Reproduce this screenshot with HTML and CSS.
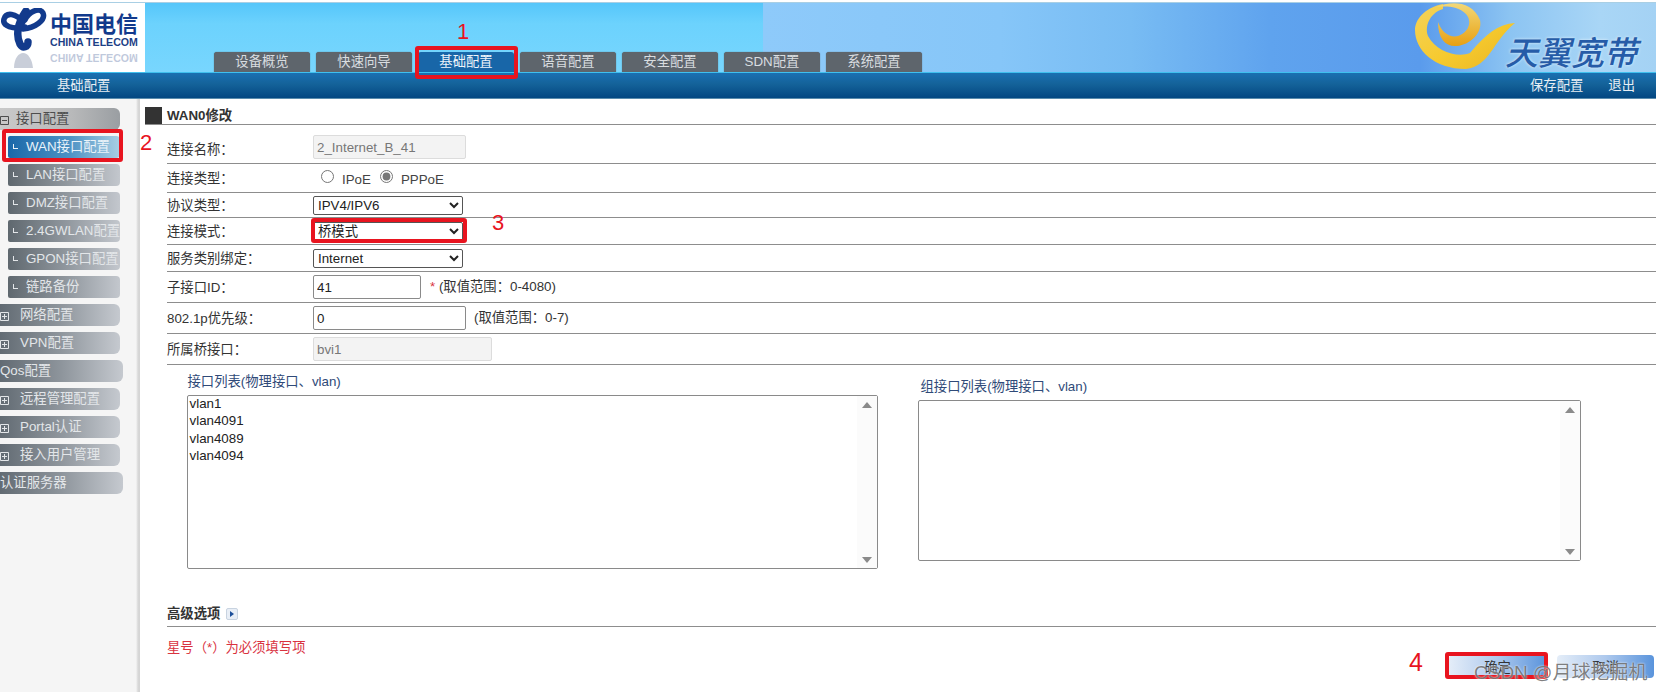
FILE: index.html
```html
<!DOCTYPE html>
<html lang="zh">
<head>
<meta charset="utf-8">
<title>WAN0修改</title>
<link rel="stylesheet" href="styles.css">
</head>
<body>
<div class="page">
  <header class="top">
    <div class="banner">
      <div class="logo">
        <svg class="logo-mark" viewBox="0 0 46 60" width="46" height="60" aria-hidden="true">
          <g fill="none" stroke="#123a8c" stroke-linecap="round">
            <path d="M22 14C15 5 5 4 3 11C1 18 12 22 24 19" stroke-width="5.5"/>
            <path d="M24 12C28 3 39 -1 42 5C45 12 34 20 22 21" stroke-width="5.5"/>
            <path d="M25 3C16 16 15 28 19 36C22 41 27 39 27 34" stroke-width="7.5"/>
          </g>
          <path d="M13 60C13 50 18 45 22 45C27 45 31 51 32 60Z" fill="#c9ced9"/>
        </svg>
        <div class="logo-text">
          <div class="logo-cn">中国电信</div>
          <div class="logo-en">CHINA TELECOM</div>
          <div class="logo-en logo-flip">CHINA TELECOM</div>
        </div>
      </div>
      <nav class="tabs">
        <a class="tab">设备概览</a>
        <a class="tab">快速向导</a>
        <a class="tab tab-on">基础配置</a>
        <a class="tab">语音配置</a>
        <a class="tab">安全配置</a>
        <a class="tab">SDN配置</a>
        <a class="tab">系统配置</a>
      </nav>
      <div class="brand">
        <svg class="brand-mark" viewBox="0 3 130 69" width="130" height="69" aria-hidden="true">
          <defs>
            <linearGradient id="gold" x1="0" y1="0" x2="1" y2="1">
              <stop offset="0" stop-color="#f3d25c"/>
              <stop offset=".55" stop-color="#f6ca2e"/>
              <stop offset="1" stop-color="#e9b524"/>
            </linearGradient>
            <linearGradient id="gold2" x1="0" y1="0" x2="0" y2="1">
              <stop offset="0" stop-color="#f2d877"/>
              <stop offset="1" stop-color="#e8a012"/>
            </linearGradient>
          </defs>
          <path fill="url(#gold)" d="M43 4C24 8 15 20 15 30C15 50 34 69 66 69C90 66 92 42 115 23C98 24 86 34 70 53C58 58 36 52 28 36C24 24 32 12 43 9Z"/>
          <path fill="url(#gold2)" d="M36 7C50 1 72 0 80 20C83 34 68 46 55 46C45 46 38 38 38 22C42 33 50 38 58 36C68 33 73 22 66 14C58 6 46 6 36 7Z"/>
        </svg>
        <span class="brand-text">天翼宽带</span>
      </div>
    </div>
    <div class="subnav">
      <span class="subnav-title">基础配置</span>
      <span class="subnav-links"><a>保存配置</a><a>退出</a></span>
    </div>
  </header>

  <div class="body">
    <aside class="side">
      <div class="item item-head"><svg class="box" viewBox="0 0 9 9"><path d="M.5.5h8v8h-8zM2 4.5h5"/></svg><span class="t1">接口配置</span></div>
      <div class="item sub sub-on"><i class="ell"></i>WAN接口配置</div>
      <div class="item sub"><i class="ell"></i>LAN接口配置</div>
      <div class="item sub"><i class="ell"></i>DMZ接口配置</div>
      <div class="item sub"><i class="ell"></i>2.4GWLAN配置</div>
      <div class="item sub"><i class="ell"></i>GPON接口配置</div>
      <div class="item sub"><i class="ell"></i>链路备份</div>
      <div class="item"><svg class="box" viewBox="0 0 9 9"><path d="M.5.5h8v8h-8zM2 4.5h5M4.5 2v5"/></svg><span class="t2">网络配置</span></div>
      <div class="item"><svg class="box" viewBox="0 0 9 9"><path d="M.5.5h8v8h-8zM2 4.5h5M4.5 2v5"/></svg><span class="t2">VPN配置</span></div>
      <div class="item wide">Qos配置</div>
      <div class="item"><svg class="box" viewBox="0 0 9 9"><path d="M.5.5h8v8h-8zM2 4.5h5M4.5 2v5"/></svg><span class="t2">远程管理配置</span></div>
      <div class="item"><svg class="box" viewBox="0 0 9 9"><path d="M.5.5h8v8h-8zM2 4.5h5M4.5 2v5"/></svg><span class="t2">Portal认证</span></div>
      <div class="item"><svg class="box" viewBox="0 0 9 9"><path d="M.5.5h8v8h-8zM2 4.5h5M4.5 2v5"/></svg><span class="t2">接入用户管理</span></div>
      <div class="item wide">认证服务器</div>
    </aside>

    <main class="main">
      <h1 class="title"><span class="title-mark"></span>WAN0修改</h1>

      <div class="row row-name">
        <label class="lab lab-low">连接名称：</label>
        <input class="field w-name" type="text" value="2_Internet_B_41" disabled>
      </div>
      <div class="row row-type">
        <label class="lab">连接类型：</label>
        <label class="radio"><input type="radio" name="c">IPoE</label>
        <label class="radio"><input type="radio" name="c" checked>PPPoE</label>
      </div>
      <div class="row row-proto">
        <label class="lab">协议类型：</label>
        <select class="sel"><option>IPV4/IPV6</option></select>
      </div>
      <div class="row row-mode">
        <label class="lab">连接模式：</label>
        <select class="sel"><option>桥模式</option></select>
      </div>
      <div class="row row-mode">
        <label class="lab">服务类别绑定：</label>
        <select class="sel"><option>Internet</option></select>
      </div>
      <div class="row row-tall">
        <label class="lab">子接口ID：</label>
        <input class="field w-id" type="text" value="41">
        <span class="hint hint-star"><b>*</b> (取值范围：0-4080)</span>
      </div>
      <div class="row row-tall">
        <label class="lab">802.1p优先级：</label>
        <input class="field w-name" type="text" value="0">
        <span class="hint">(取值范围：0-7)</span>
      </div>
      <div class="row row-tall">
        <label class="lab">所属桥接口：</label>
        <input class="field w-bvi" type="text" value="bvi1" disabled>
      </div>

      <div class="lists">
        <section class="col col-l">
          <div class="col-title">接口列表(物理接口、vlan)</div>
          <div class="listbox lb-l">
            <ul class="opts">
              <li>vlan1</li>
              <li>vlan4091</li>
              <li>vlan4089</li>
              <li>vlan4094</li>
            </ul>
            <div class="scroll"><i class="up"></i><i class="down"></i></div>
          </div>
        </section>
        <section class="col col-r">
          <div class="col-title">组接口列表(物理接口、vlan)</div>
          <div class="listbox lb-r">
            <ul class="opts"></ul>
            <div class="scroll"><i class="up"></i><i class="down"></i></div>
          </div>
        </section>
      </div>

      <div class="adv">高级选项<span class="adv-btn"><i></i></span></div>
      <div class="foot">
        <div class="note">星号（*）为必须填写项</div>
        <div class="btns"><button class="btn">确定</button><button class="btn">取消</button></div>
      </div>
    </main>
  </div>

  <div class="rbox rb1"></div>
  <div class="rbox rb2"></div>
  <div class="rbox rb3"></div>
  <div class="rbox rb4"></div>
  <span class="num n1">1</span>
  <span class="num n2">2</span>
  <span class="num n3">3</span>
  <span class="num n4">4</span>
  <div class="mark">CSDN @月球挖掘机</div>
</div>
</body>
</html>
```

FILE: styles.css
```css
* { box-sizing: border-box; }
html, body { margin: 0; height: 692px; overflow: hidden; background: #fff; }
body { font: 13.33px/16px "Liberation Sans", "Noto Sans CJK SC", sans-serif; color: #333; }
.page { position: relative; width: 1662px; height: 692px; overflow: hidden; }

/* header */
.top { width: 1656px; padding-top: 2px; }
.banner {
  display: flex; height: 70px; border-top: 1px solid #a9cfe4;
  background:
    linear-gradient(180deg, #55c6fa 0, #6cd2fd 30%, #78d6fe 100%) 0 0 / 763px 100% no-repeat,
    linear-gradient(90deg, #8ecafa 763px, #86c6f8 1000px, #78bcf3 1130px, #5fa3ee 1270px, #5a9bec 1420px, #8cc4f2 1510px, #a9d6f6 1600px, #a4d2f4 1656px);
}
.logo { display: flex; width: 145px; flex: none; background: #fff; padding: 5px 0 0 1px; overflow: hidden; }
.logo-mark { flex: none; }
.logo-text { margin-left: 3px; padding-top: 1px; }
.logo-cn { font: 700 22px/27px "Noto Sans CJK SC", sans-serif; color: #123a8c; white-space: nowrap; }
.logo-en { font: 700 10.6px/9px "Liberation Sans", sans-serif; color: #1d3f86; white-space: nowrap; margin-top: 2px; }
.logo-flip { transform: scaleY(-1); opacity: .28; margin-top: 6px; }
.tabs { display: flex; gap: 6px; margin: 0 0 0 69px; align-self: flex-end; }
.tab {
  display: block; width: 96px; height: 20px; text-align: center; line-height: 20px;
  background: #5e656c; color: #d9dde0; border-radius: 3px 3px 0 0; box-shadow: 0 0 1px #4a5056;
}
.tab-on { background: #1866a8; color: #eef4fa; box-shadow: none; }
.brand { position: relative; flex: none; width: 256px; margin-left: auto; }
.brand-mark { display: block; position: absolute; left: 0; top: 0; }
.brand-text {
  position: absolute; left: 105px; top: 30px; font: italic 500 33px/36px "Noto Sans CJK SC", sans-serif;
  color: #265ca8; white-space: nowrap; text-shadow: 0 0 3px #e8f4fc;
}
.subnav {
  display: flex; justify-content: space-between; align-items: center; height: 27px; color: #e8eef4;
  padding: 0 21px 0 57px; border-top: 1px solid #3fc0ee; border-bottom: 1px solid #5a8cad;
  background: linear-gradient(180deg, #1a70b2 0, #146299 45%, #034782 100%);
  position: relative;
}
.subnav-links { display: flex; gap: 25px; }

/* layout */
.body { display: flex; height: 593px; }
.side {
  flex: none; width: 145px; padding-top: 9px; display: flex; flex-direction: column; gap: 6px;
  background: linear-gradient(90deg, #f5f5f5 0, #f5f5f5 136px, #d8d8d8 138px, #d4d4d4 140px, #fff 140px);
}
.item {
  display: flex; align-items: center; height: 22px; width: 120px; white-space: nowrap; overflow: hidden;
  color: #e3e6e9; border-radius: 0 6px 6px 0;
  background: linear-gradient(90deg, #626b73 0, #8e959c 50%, #c5c9cf 100%);
}
.item-head { background: linear-gradient(90deg, #c9c9c9 0, #b8b9ba 60%, #9a9ea2 100%); color: #4d4d4d; }
.wide { width: 123px; }
.sub { margin-left: 8px; width: 112px; border-radius: 2px 4px 4px 2px; background: linear-gradient(90deg, #5f686f 0, #8e959c 50%, #c3c7cd 100%); }
.sub-on { background: linear-gradient(90deg, #1a68a9 0, #4d92c4 55%, #a9cfe4 100%); color: #eaf3f9; }
.box { flex: none; width: 9px; height: 9px; margin-top: 2px; fill: none; stroke: currentColor; stroke-width: 1; }
.t1 { margin-left: 7px; }
.t2 { margin-left: 11px; }
.ell { flex: none; width: 5px; height: 5px; margin: 0 8px 1px 5px; border-left: 1px solid currentColor; border-bottom: 1px solid currentColor; }

/* main */
.main { flex: 1; min-width: 0; padding-top: 8px; }
.title {
  display: flex; align-items: center; gap: 5px; margin: 0 6px 0 0; height: 18px; font-size: 13.33px; line-height: 17px; font-weight: 700;
  color: #333; border-bottom: 1px solid #8d8d8d;
}
.title-mark { width: 17px; height: 17px; background: #333; }
.row { display: flex; align-items: center; margin: 0 6px 0 22px; border-bottom: 1px solid #8d8d8d; }
.row-name { height: 39px; padding-top: 6px; }
.row-type { height: 29px; }
.row-proto { height: 25px; }
.row-mode { height: 27px; }
.row-tall { height: 31px; }
.lab { flex: none; width: 146px; color: #333; padding-top: 1px; }
.lab-low { padding-top: 5px; }
.field {
  height: 24px; padding: 0 3px; font: 13.33px "Liberation Sans", sans-serif; color: #222; background: #fff;
  border: 1px solid #8a8a8a; border-radius: 2px; outline: 0;
}
.field:disabled { background: #f3f3f3; border-color: #dcdcdc; color: #777; }
.w-name { width: 153px; }
.w-id { width: 108px; }
.w-bvi { width: 179px; }
.radio { display: flex; align-items: center; color: #444; margin-right: 1px; padding-top: 4px; }
.radio input { width: 13px; height: 13px; margin: 0 8px 8px 8px; accent-color: #777; }
.sel {
  width: 150px; height: 19px; padding: 0; font: 13.33px "Liberation Sans", "Noto Sans CJK SC", sans-serif; color: #222;
  background: #fff; border: 1px solid #555; border-radius: 2px;
}
.hint { margin-left: 8px; color: #333; }
.hint-star { margin-left: 9px; }
.hint-star b { color: #d9333f; font-weight: 400; }

.lists { display: flex; gap: 40px; margin-left: 41.5px; height: 204px; }
.col-title { color: #2f4a78; padding-left: 1px; }
.col-l { width: 691px; padding-top: 9px; }
.col-r { width: 663px; padding-top: 14px; }
.col-r .col-title { padding-left: 3px; }
.listbox { display: flex; justify-content: space-between; background: #fff; border: 1px solid #8a8a8a; border-radius: 2px; }
.lb-l { height: 174px; margin-top: 5px; }
.lb-r { height: 161px; margin-top: 5px; }
.opts { list-style: none; margin: -1px 0 0; padding: 0 0 0 2px; color: #222; }
.opts li { height: 17.3px; line-height: 17.3px; }
.scroll { display: flex; flex-direction: column; justify-content: space-between; width: 20px; padding: 6px 0 5px; background: #fbfbfb; align-items: center; }
.up, .down { width: 0; height: 0; border-left: 5px solid transparent; border-right: 5px solid transparent; }
.up { border-bottom: 6px solid #8a8a8a; }
.down { border-top: 6px solid #8a8a8a; }

.adv {
  display: flex; align-items: center; height: 23px; margin: 35px 6px 0 22px; padding-bottom: 2px; font-weight: 700; color: #333;
  border-bottom: 1px solid #8d8d8d;
}
.adv-btn {
  display: flex; align-items: center; justify-content: center; width: 12px; height: 12px; margin-left: 6px;
  background: #e8eef6; border: 1px solid #c8d3e0; border-radius: 2px;
}
.adv-btn i { width: 0; height: 0; border-left: 4px solid #1c4f9a; border-top: 3px solid transparent; border-bottom: 3px solid transparent; }
.foot { display: flex; justify-content: space-between; margin: 0 8px 0 22px; }
.note { padding-top: 13px; color: #d9333f; }
.btns { display: flex; gap: 11px; margin-top: 28px; }
.btn {
  width: 97px; height: 23px; padding: 0; font: 13.33px "Liberation Sans", "Noto Sans CJK SC", sans-serif; color: #333;
  border: 0; border-radius: 4px; background: linear-gradient(90deg, #e4edf8 0, #aec9ed 50%, #5a94dc 100%);
}

/* overlays */
.rbox { position: absolute; border: 4px solid #e8141f; border-radius: 3px; }
.rb1 { left: 415px; top: 46px; width: 103px; height: 33px; }
.rb2 { left: 2px; top: 129px; width: 121px; height: 33px; }
.rb3 { left: 311px; top: 218px; width: 156px; height: 25px; }
.rb4 { left: 1445px; top: 652px; width: 103px; height: 27px; }
.num { position: absolute; font: 22px/24px "Liberation Sans", sans-serif; color: #e8141f; }
.n1 { left: 457px; top: 20px; }
.n2 { left: 140px; top: 131px; }
.n3 { left: 492px; top: 211px; }
.n4 { left: 1409px; top: 650px; font-size: 25px; }
.mark {
  position: absolute; left: 1474px; top: 662px; font: 19px/22px "Liberation Sans", "Noto Sans CJK SC", sans-serif;
  color: rgba(105,105,105,.85); text-shadow: 0 0 2px #fff; white-space: nowrap;
}
```
